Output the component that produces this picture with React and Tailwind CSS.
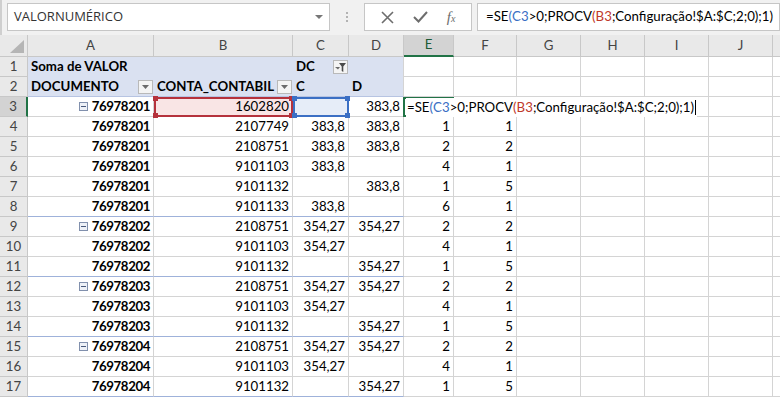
import React from "react";

const GRID =
  "grid grid-cols-[28px_126px_139px_56px_55px_50px_63px_64px_64px_64px_64px_1fr]";

const letters = ["A", "B", "C", "D", "E", "F", "G", "H", "I", "J"];

const dataRows = [
  { n: 4, a: "76978201", b: "2107749", c: "383,8", d: "383,8", e: "1", f: "1" },
  { n: 5, a: "76978201", b: "2108751", c: "383,8", d: "383,8", e: "2", f: "2" },
  { n: 6, a: "76978201", b: "9101103", c: "383,8", d: "", e: "4", f: "1" },
  { n: 7, a: "76978201", b: "9101132", c: "", d: "383,8", e: "1", f: "5" },
  { n: 8, a: "76978201", b: "9101133", c: "383,8", d: "", e: "6", f: "1", end: true },
  { n: 9, a: "76978202", b: "2108751", c: "354,27", d: "354,27", e: "2", f: "2", head: true },
  { n: 10, a: "76978202", b: "9101103", c: "354,27", d: "", e: "4", f: "1" },
  { n: 11, a: "76978202", b: "9101132", c: "", d: "354,27", e: "1", f: "5", end: true },
  { n: 12, a: "76978203", b: "2108751", c: "354,27", d: "354,27", e: "2", f: "2", head: true },
  { n: 13, a: "76978203", b: "9101103", c: "354,27", d: "", e: "4", f: "1" },
  { n: 14, a: "76978203", b: "9101132", c: "", d: "354,27", e: "1", f: "5", end: true },
  { n: 15, a: "76978204", b: "2108751", c: "354,27", d: "354,27", e: "2", f: "2", head: true },
  { n: 16, a: "76978204", b: "9101103", c: "354,27", d: "", e: "4", f: "1" },
  { n: 17, a: "76978204", b: "9101132", c: "", d: "354,27", e: "1", f: "5", end: true },
];

const cell = "h-5 border-r border-b border-[#d4d4d4] flex items-center px-[3px] whitespace-nowrap";

// small pivot collapse box
const Collapse = () => (
  <span className="w-[9px] h-[9px] border border-[#8190ad] bg-[#eef1f7] flex items-center justify-center shrink-0 mr-[1px]">
    <span className="w-[5px] h-px bg-[#4a5a7c]" />
  </span>
);

const DropBtn = () => (
  <span className="w-[15px] h-[14px] border border-[#b9b9b9] bg-[#f4f4f4] flex items-center justify-center shrink-0">
    <svg width="7" height="4" viewBox="0 0 7 4">
      <path d="M0 0h7L3.5 4z" fill="#6b6b6b" />
    </svg>
  </span>
);

const FilterBtn = () => (
  <span className="w-[15px] h-[14px] border border-[#b9b9b9] bg-[#f4f4f4] flex items-center justify-center shrink-0">
    <svg width="11" height="9" viewBox="0 0 11 9">
      <path d="M0 4h5L3 6.5z" fill="#6b6b6b" />
      <path d="M4 0h7L8.3 3.6V9L6.7 8V3.6z" fill="#4a4a4a" />
    </svg>
  </span>
);

// corner handles on reference boxes
const Handles = ({ color }) => (
  <>
    <span className={`absolute -left-[3px] -top-[3px] w-[5px] h-[5px] ${color} z-20`} />
    <span className={`absolute -right-[3px] -top-[3px] w-[5px] h-[5px] ${color} z-20`} />
    <span className={`absolute -left-[3px] -bottom-[3px] w-[5px] h-[5px] ${color} z-20`} />
    <span className={`absolute -right-[3px] -bottom-[3px] w-[5px] h-[5px] ${color} z-20`} />
  </>
);

const Formula = () => (
  <>
    =SE<span className="text-[#3a6fc4]">(</span>
    <span className="text-[#3a6fc4]">C3</span>&gt;0;PROCV
    <span className="text-[#c0392b]">(</span>
    <span className="text-[#c0392b]">B3</span>;Configuração!$A:$C;2;0);1)
  </>
);

const RowHead = ({ n, active }) => (
  <div
    className={`h-5 border-b border-[#c8c8c8] flex items-center justify-center text-[#444] ${
      active ? "bg-[#d3d3d3] border-r-2 border-r-[#217346]" : "bg-[#e9e9e9] border-r border-r-[#c8c8c8]"
    }`}
  >
    {n}
  </div>
);

const Filler = () => <div className="h-5 border-b border-[#d4d4d4]" />;

export default function App() {
  return (
    <div className="w-[780px] h-[398px] overflow-hidden bg-white font-['Lato',sans-serif] text-[13.25px] text-black">
      {/* Formula bar */}
      <div className="h-[35px] bg-[#f1f1f1] flex items-start pt-[3px] border-l-2 border-[#cfcfcf]">
        <div className="ml-[5px] w-[323px] h-[28px] bg-white border border-[#c6c6c6] flex items-center justify-between pl-[6px] pr-[6px]">
          <span className="font-['Open_Sans',sans-serif] text-[13px] text-[#333]">VALORNUMÉRICO</span>
          <svg width="8" height="4" viewBox="0 0 8 4">
            <path d="M0 0h8L4 4z" fill="#777" />
          </svg>
        </div>
        <div className="w-[34px] h-[28px] flex flex-col items-center justify-center gap-[2px]">
          <span className="w-[2px] h-[2px] bg-[#b3b3b3]" />
          <span className="w-[2px] h-[2px] bg-[#b3b3b3]" />
          <span className="w-[2px] h-[2px] bg-[#b3b3b3]" />
        </div>
        <div className="w-[108px] h-[28px] bg-white border border-[#c6c6c6] flex items-center justify-around px-[6px]">
          <svg width="13" height="13" viewBox="0 0 13 13">
            <path d="M1 1l11 11M12 1L1 12" stroke="#6d6d6d" strokeWidth="1.6" />
          </svg>
          <svg width="15" height="12" viewBox="0 0 15 12">
            <path d="M1 6l4.5 4.5L14 1" stroke="#6d6d6d" strokeWidth="2" fill="none" />
          </svg>
          <span className="font-['Liberation_Serif',serif] italic text-[#6d6d6d] text-[15px] leading-none">
            f<span className="text-[10px]">x</span>
          </span>
        </div>
        <div className="ml-[5px] flex-1 h-[28px] bg-white border border-[#c6c6c6] flex items-center pl-[8px] whitespace-nowrap overflow-hidden">
          <Formula />
        </div>
      </div>

      {/* Column headers */}
      <div className={`${GRID} h-[22px]`}>
        <div className="h-[22px] bg-[#e9e9e9] border-r border-b border-[#c8c8c8] flex items-end justify-end pr-[3px] pb-[3px]">
          <svg width="14" height="13" viewBox="0 0 14 13">
            <path d="M14 0v13H0z" fill="#b5b5b5" />
          </svg>
        </div>
        {letters.map((l) => (
          <div
            key={l}
            className={`h-[22px] flex items-center justify-center border-r border-[#c8c8c8] ${
              l === "E"
                ? "bg-[#d3d3d3] border-b-2 border-b-[#217346] text-[#1d5b35]"
                : "bg-[#e9e9e9] border-b border-b-[#c8c8c8] text-[#444]"
            }`}
          >
            {l}
          </div>
        ))}
        <div className="h-[22px] bg-[#e9e9e9] border-b border-[#c8c8c8]" />
      </div>

      {/* Row 1 */}
      <div className={GRID}>
        <RowHead n={1} />
        <div className="h-5 bg-[#dae1f1] flex items-center px-[3px] font-bold whitespace-nowrap">Soma de VALOR</div>
        <div className="h-5 bg-[#dae1f1]" />
        <div className="h-5 bg-[#dae1f1] flex items-center justify-between pl-[3px] pr-[1px] font-bold">
          DC
          <FilterBtn />
        </div>
        <div className="h-5 bg-[#dae1f1] border-r border-[#d4d4d4]" />
        {[0, 1, 2, 3, 4, 5].map((i) => (
          <div key={i} className={cell} />
        ))}
        <Filler />
      </div>

      {/* Row 2 */}
      <div className={GRID}>
        <RowHead n={2} />
        <div className="h-5 bg-[#dae1f1] border-b border-[#b7c4e2] flex items-center justify-between pl-[3px] pr-[1px] font-bold">
          DOCUMENTO
          <DropBtn />
        </div>
        <div className="h-5 bg-[#dae1f1] border-b border-[#b7c4e2] flex items-center justify-between pl-[3px] pr-[1px] font-bold">
          CONTA_CONTABIL
          <DropBtn />
        </div>
        <div className="h-5 bg-[#dae1f1] border-b border-[#b7c4e2] flex items-center px-[3px] font-bold">C</div>
        <div className="h-5 bg-[#dae1f1] border-b border-r border-[#b7c4e2] border-r-[#d4d4d4] flex items-center px-[3px] font-bold">D</div>
        {[0, 1, 2, 3, 4, 5].map((i) => (
          <div key={i} className={cell} />
        ))}
        <Filler />
      </div>

      {/* Row 3 (active) */}
      <div className={GRID}>
        <RowHead n={3} active />
        <div className={`${cell} justify-end gap-[3px] font-bold tracking-[-0.4px]`}>
          <Collapse />
          76978201
        </div>
        <div className="h-5 relative bg-[#f9e5e5] border-2 border-[#b5323c] flex items-center justify-end pr-[2px]">
          1602820
          <Handles color="bg-[#b5323c]" />
        </div>
        <div className="h-5 relative bg-[#e6edf8] border-2 border-[#3b6fc4]">
          <Handles color="bg-[#3b6fc4]" />
        </div>
        <div className={`${cell} justify-end`}>383,8</div>
        <div className="h-5 relative border-2 border-[#217346] border-r-0 -ml-px">
          <span className="absolute left-[1px] -top-[1px] h-[19px] bg-white z-10 flex items-center whitespace-nowrap pr-[1px] pl-[1px]">
            <Formula />
            <span className="w-px h-[15px] bg-black ml-[1px]" />
          </span>
        </div>
        <div className="h-5 border-b border-[#d4d4d4]" />
        <div className="h-5 border-b border-[#d4d4d4]" />
        <div className="h-5 border-b border-[#d4d4d4]" />
        <div className={cell} />
        <div className={cell} />
        <Filler />
      </div>

      {/* Pivot data rows */}
      {dataRows.map((r) => {
        const pv = r.end ? "border-b-[#9fb2da]" : "";
        return (
          <div key={r.n} className={GRID}>
            <RowHead n={r.n} />
            <div className={`${cell} ${pv} justify-end gap-[3px] font-bold tracking-[-0.4px]`}>
              {r.head && <Collapse />}
              {r.a}
            </div>
            <div className={`${cell} ${pv} justify-end`}>{r.b}</div>
            <div className={`${cell} ${pv} justify-end`}>{r.c}</div>
            <div className={`${cell} ${pv} justify-end`}>{r.d}</div>
            <div className={`${cell} justify-end`}>{r.e}</div>
            <div className={`${cell} justify-end`}>{r.f}</div>
            <div className={cell} />
            <div className={cell} />
            <div className={cell} />
            <div className={cell} />
            <Filler />
          </div>
        );
      })}
    </div>
  );
}
